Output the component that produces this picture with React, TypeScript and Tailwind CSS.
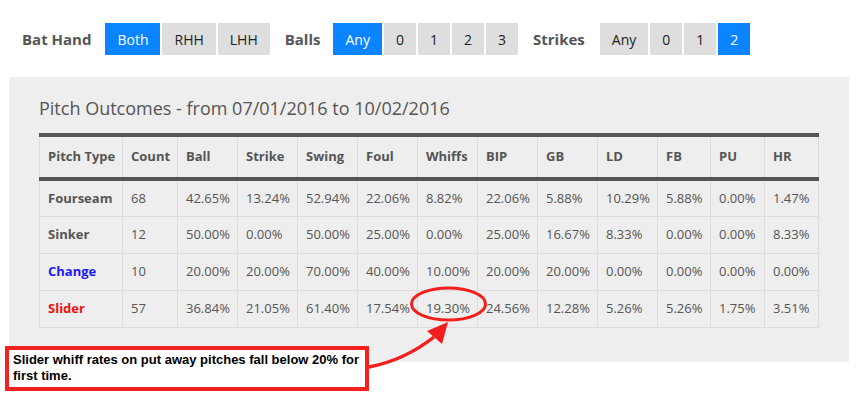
import React from "react";

type Row = { name: string; color: string; count: string; values: string[] };

const headers = ["Pitch Type", "Count", "Ball", "Strike", "Swing", "Foul", "Whiffs", "BIP", "GB", "LD", "FB", "PU", "HR"];
const widths = [83, 55, 60, 60, 60, 60, 60, 60, 60, 60, 53, 54, 54];

const rows: Row[] = [
  {
    name: "Fourseam",
    color: "text-[#555]",
    count: "68",
    values: ["42.65%", "13.24%", "52.94%", "22.06%", "8.82%", "22.06%", "5.88%", "10.29%", "5.88%", "0.00%", "1.47%"],
  },
  {
    name: "Sinker",
    color: "text-[#555]",
    count: "12",
    values: ["50.00%", "0.00%", "50.00%", "25.00%", "0.00%", "25.00%", "16.67%", "8.33%", "0.00%", "0.00%", "8.33%"],
  },
  {
    name: "Change",
    color: "text-[#1c1cf0]",
    count: "10",
    values: ["20.00%", "20.00%", "70.00%", "40.00%", "10.00%", "20.00%", "20.00%", "0.00%", "0.00%", "0.00%", "0.00%"],
  },
  {
    name: "Slider",
    color: "text-[#ee1111]",
    count: "57",
    values: ["36.84%", "21.05%", "61.40%", "17.54%", "19.30%", "24.56%", "12.28%", "5.26%", "5.26%", "1.75%", "3.51%"],
  },
];

const FilterGroup = ({ options, active }: { options: string[]; active: string }) => (
  <div className="flex gap-[2px]">
    {options.map((o) => (
      <button
        key={o}
        className={
          o === active
            ? "h-8 px-3 text-[14px] bg-[#0a84ff] text-white"
            : "h-8 px-3 text-[14px] bg-[#dedede] text-[#222]"
        }
      >
        {o}
      </button>
    ))}
  </div>
);

const App = () => {
  return (
    <div className="relative w-[868px] h-[395px] bg-white overflow-hidden font-['Open_Sans',sans-serif]">
      {/* filters */}
      <div className="flex items-start pt-[23px] pl-[22px] h-[77px]">
        <span className="text-[15px] font-bold text-[#555] mr-[14px] leading-8">Bat Hand</span>
        <FilterGroup options={["Both", "RHH", "LHH"]} active="Both" />
        <span className="text-[15px] font-bold text-[#555] ml-[15px] mr-[13px] leading-8">Balls</span>
        <FilterGroup options={["Any", "0", "1", "2", "3"]} active="Any" />
        <span className="text-[15px] font-bold text-[#555] ml-[15px] mr-[15px] leading-8">Strikes</span>
        <FilterGroup options={["Any", "0", "1", "2"]} active="2" />
      </div>

      {/* panel */}
      <div className="ml-[9px] w-[840px] h-[285px] bg-[#eeeeee] pt-[18px] pl-[30px]">
        <h2 className="text-[18px] leading-[26px] text-[#555] mb-[12px]">
          Pitch Outcomes - from 07/01/2016 to 10/02/2016
        </h2>
        <table className="table-fixed border-collapse w-[779px] text-[13px] text-[#555]">
          <colgroup>
            {widths.map((w, i) => (
              <col key={i} style={{ width: w }} />
            ))}
          </colgroup>
          <thead>
            <tr className="border-t-4 border-b-4 border-t-[#555] border-b-[#555] h-[44px]">
              {headers.map((h) => (
                <th key={h} className="border-x border-x-[#dcdcdc] px-2 text-left font-bold whitespace-nowrap overflow-visible">
                  {h}
                </th>
              ))}
            </tr>
          </thead>
          <tbody>
            {rows.map((r) => (
              <tr key={r.name} className="h-[37px]">
                <td className={`border border-[#dcdcdc] px-2 font-bold ${r.color}`}>{r.name}</td>
                <td className="border border-[#dcdcdc] px-2">{r.count}</td>
                {r.values.map((v, i) => (
                  <td key={i} className="border border-[#dcdcdc] px-2 whitespace-nowrap">
                    {v}
                  </td>
                ))}
              </tr>
            ))}
          </tbody>
        </table>
      </div>

      {/* annotation box */}
      <div className="absolute left-[5px] top-[346px] w-[364px] h-[45px] border-4 border-[#f42121] bg-white pl-[4px] pt-[2px] font-['Liberation_Sans',Arial,sans-serif] font-bold text-[13px] leading-[16px] text-black">
        Slider whiff rates on put away pitches fall below 20% for first time.
      </div>

      {/* ellipse + arrow */}
      <svg className="absolute left-0 top-0 pointer-events-none" width="868" height="395" viewBox="0 0 868 395">
        <ellipse cx="448.5" cy="304" rx="37" ry="16" fill="none" stroke="#f41e1e" strokeWidth="3" />
        <path d="M369 367 C 395 362, 415 352, 434 337" fill="none" stroke="#f41e1e" strokeWidth="3.5" />
        <polygon points="448,322 427,331 442,344" fill="#f41e1e" />
      </svg>
    </div>
  );
};

export default App;
